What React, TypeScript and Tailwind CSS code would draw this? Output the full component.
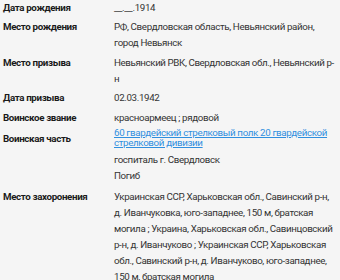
import React from "react";

interface Row {
  label: string;
  values: React.ReactNode[];
  extra?: string;
}

const rows: Row[] = [
  { label: "Дата рождения", values: ["__.__.1914"] },
  {
    label: "Место рождения",
    values: ["РФ, Свердловская область, Невьянский район, город Невьянск"],
  },
  {
    label: "Место призыва",
    values: [
      <span key="call" className="whitespace-nowrap tracking-[-0.4px]">
        Невьянский РВК, Свердловская обл., Невьянский р-
        <br />н
      </span>,
    ],
  },
  { label: "Дата призыва", values: ["02.03.1942"] },
  { label: "Воинское звание", values: ["красноармеец ; рядовой"] },
  {
    label: "Воинская часть",
    extra: "pt-[1.5px]",
    values: [
      <a
        key="unit"
        href="#"
        className="-mt-[3px] mb-[4px] block leading-[10px] text-[#2f8fdf] underline"
      >
        60 гвардейский стрелковый полк 20 гвардейской стрелковой дивизии
      </a>,
      "госпиталь г. Свердловск",
      "Погиб",
    ],
  },
  {
    label: "Место захоронения",
    extra: "pt-[1.5px]",
    values: [
      "Украинская ССР, Харьковская обл., Савинский р-н, д. Иванчуковка, юго-западнее, 150 м, братская могила ; Украина, Харьковская обл., Савинцовский р-н, д. Иванчуково ; Украинская ССР, Харьковская обл., Савинский р-н, д. Иванчуково, юго-западнее, 150 м, братская могила",
    ],
  },
];

export default function App() {
  return (
    <div
      className="min-h-screen w-[340px] overflow-hidden bg-[#f5f5f5] px-[3px] text-[9.75px] leading-[16px] tracking-[-0.35px] text-[#333]"
      style={{ fontFamily: "Roboto, 'Noto Sans', sans-serif" }}
    >
      <div className="-mt-[0.5px] flex flex-col gap-[3.5px]">
        {rows.map((row) => (
          <div key={row.label} className={`flex ${row.extra ?? ""}`}>
            <div className="w-[111px] shrink-0 font-bold text-[#1a1a1a]">
              {row.label}
            </div>
            <div className="w-[221px]">
              {row.values.map((v, i) => (
                <div key={i}>{v}</div>
              ))}
            </div>
          </div>
        ))}
      </div>
    </div>
  );
}
